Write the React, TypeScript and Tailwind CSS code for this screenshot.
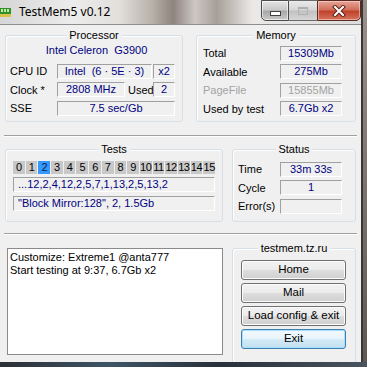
import React from 'react';

const font = "font-['Liberation_Sans',Arial,sans-serif]";

// sunken "static edge" box used for the read-only values
const fieldCls =
  'flex items-center h-[15px] border border-t-[#a0a0a0] border-l-[#a0a0a0] border-b-white border-r-white text-[11px] leading-[13px]';

const Field = ({ w, children, left, grey }: { w: string; children?: React.ReactNode; left?: boolean; grey?: boolean }) => (
  <div
    className={`${fieldCls} ${w} ${left ? 'justify-start pl-[4px]' : 'justify-center'} ${
      grey ? 'text-[#a3a3a3]' : 'text-[#000080]'
    } whitespace-nowrap overflow-hidden`}
  >
    {children}
  </div>
);

const GroupBox = ({
  title,
  className,
  children,
}: {
  title: string;
  className: string;
  children: React.ReactNode;
}) => (
  <div className={`relative border border-[#d5dfe5] rounded-[3px] shadow-[inset_1px_1px_0_#fff] ${className}`}>
    <div className="absolute left-1/2 -translate-x-1/2 top-[-8px] px-[3px] bg-[#f0f0f0] text-[11px] leading-[14px] text-black whitespace-nowrap">
      {title}
    </div>
    {children}
  </div>
);

const Separator = () => (
  <div className="ml-[4px] w-[353px] h-[2px] border-t border-t-[#a0a0a0] border-b border-b-white" />
);

const WinButton = ({ label, focused }: { label: string; focused?: boolean }) => (
  <div
    className={`h-[20px] w-[105px] rounded-[3px] border flex items-center justify-center text-[11.5px] text-black ${
      focused
        ? 'border-[#3c7fb1] shadow-[inset_0_0_0_1px_#a7e0fb] bg-[linear-gradient(180deg,#f2f9fd_0%,#e8f4fb_48%,#d4eaf6_52%,#c2dff0_100%)]'
        : 'border-[#707070] shadow-[inset_0_0_0_1px_#fcfcfc] bg-[linear-gradient(180deg,#f2f2f2_0%,#ebebeb_48%,#dddddd_52%,#cfcfcf_100%)]'
    }`}
  >
    {label}
  </div>
);

const tests = Array.from({ length: 16 }, (_, i) => i);

export default function App() {
  return (
    <div className={`w-[367px] h-[367px] overflow-hidden flex flex-col bg-[#7d746e] ${font}`}>
      <div className="flex h-[362px]">
        <div className="w-[361px] flex flex-col">
          {/* title bar */}
          <div className="h-[25px] flex items-start border-b border-b-[#8e8e8e] bg-[linear-gradient(90deg,#d6d6d6_0%,#ececec_20%,#e2dfdc_33%,#b9b1aa_42%,#8e847e_48%,#cdc8c4_54%,#a79f99_60%,#ebe9e7_70%,#dcdcdc_100%)]">
            <svg width="11" height="9" viewBox="0 0 11 9" className="mt-[8px]">
              <rect x="0" y="0" width="11" height="6" fill="#2f8f2a" />
              <rect x="1" y="1" width="2" height="3" fill="#bfe8a0" />
              <rect x="4" y="1" width="2" height="3" fill="#bfe8a0" />
              <rect x="7" y="1" width="2" height="3" fill="#bfe8a0" />
              <rect x="0" y="6" width="11" height="3" fill="#d8c24a" />
            </svg>
            <div className="ml-[8px] mt-[4px] text-[12px] leading-[16px] text-black font-['Noto_Sans',sans-serif]">
              TestMem5 v0.12
            </div>
            <div className="ml-auto flex h-[21px]">
              <div className="w-[28px] h-full border border-[#4b4b4b] rounded-bl-[5px] flex items-center justify-center bg-[linear-gradient(180deg,#e4e4e4_0%,#c9c9c9_45%,#a9a9a9_55%,#c8c8c8_100%)] shadow-[inset_0_0_0_1px_rgba(255,255,255,0.6)]">
                <div className="w-[11px] h-[5px] mt-[5px] bg-white border border-[#404040]" />
              </div>
              <div className="w-[28px] h-full border-y border-[#6a6a6a] flex items-center justify-center bg-[linear-gradient(180deg,#eaeaea_0%,#d6d6d6_45%,#c2c2c2_55%,#d6d6d6_100%)]">
                <div className="w-[10px] h-[8px] border border-[#b0b0b0] border-t-2" />
              </div>
              <div className="w-[44px] h-full border border-[#5a2a22] rounded-br-[5px] flex items-center justify-center bg-[linear-gradient(180deg,#e6a597_0%,#d2705c_45%,#c2432c_55%,#d5735e_100%)] shadow-[inset_0_0_0_1px_rgba(255,230,220,0.5)]">
                <svg width="14" height="12" viewBox="0 0 14 12">
                  <path d="M3 2 L11 10 M11 2 L3 10" stroke="#5b2318" strokeWidth="4" strokeLinecap="square" />
                  <path d="M3 2 L11 10 M11 2 L3 10" stroke="#ffffff" strokeWidth="2" strokeLinecap="square" />
                </svg>
              </div>
            </div>
          </div>

          {/* client area */}
          <div className="flex-1 bg-[#f0f0f0] flex flex-col overflow-hidden text-[11px] text-black">
            <div className="flex pl-[5px] mt-[10px] gap-[13px]">
              <GroupBox title="Processor" className="w-[178px] h-[87px]">
                <div className="mt-[8px] h-[13px] leading-[13px] text-center pl-[5px] text-[#000080]">
                  Intel Celeron&nbsp; G3900
                </div>
                <div className="mt-[6px] flex flex-col gap-[2px] pl-[4px]">
                  <div className="flex items-center">
                    <div className="w-[47px]">CPU ID</div>
                    <Field w="w-[95px]">Intel&nbsp; (6 · 5E · 3)</Field>
                    <div className="w-[1px]" />
                    <Field w="w-[22px]">x2</Field>
                  </div>
                  <div className="flex items-center">
                    <div className="w-[47px]">Clock *</div>
                    <Field w="w-[68px]">2808 MHz</Field>
                    <div className="w-[28px] pl-[3px]">Used</div>
                    <Field w="w-[22px]">2</Field>
                  </div>
                  <div className="flex items-center">
                    <div className="w-[47px]">SSE</div>
                    <Field w="w-[118px]">7.5 sec/Gb</Field>
                  </div>
                </div>
              </GroupBox>
              <GroupBox title="Memory" className="w-[160px] h-[87px]">
                <div className="mt-[9px] flex flex-col gap-[2px] pl-[6px]">
                  <div className="flex items-center">
                    <div className="w-[77px]">Total</div>
                    <Field w="w-[62px]">15309Mb</Field>
                  </div>
                  <div className="flex items-center">
                    <div className="w-[77px]">Available</div>
                    <Field w="w-[62px]">275Mb</Field>
                  </div>
                  <div className="flex items-center">
                    <div className="w-[77px] text-[#a3a3a3]">PageFile</div>
                    <Field w="w-[62px]" grey>
                      15855Mb
                    </Field>
                  </div>
                  <div className="flex items-center">
                    <div className="w-[77px]">Used by test</div>
                    <Field w="w-[62px]">6.7Gb x2</Field>
                  </div>
                </div>
              </GroupBox>
            </div>

            <div className="mt-[13px]">
              <Separator />
            </div>

            <div className="flex pl-[5px] mt-[12px] gap-[9px]">
              <GroupBox title="Tests" className="w-[218px] h-[73px]">
                <div className="mt-[11px] ml-[7px] grid grid-cols-16 gap-px w-[202px]">
                  {tests.map((n) => (
                    <div
                      key={n}
                      className={`h-[13px] leading-[13px] text-[11px] text-center tracking-[-0.5px] whitespace-nowrap ${
                        n === 2 ? 'bg-[#3399ff] text-[#10204a]' : 'bg-[#c8c8c8] text-black'
                      }`}
                    >
                      {n}
                    </div>
                  ))}
                </div>
                <div className="mt-[3px] ml-[7px] flex flex-col gap-[4px]">
                  <Field w="w-[202px]" left>
                    ...12,2,4,12,2,5,7,1,13,2,5,13,2
                  </Field>
                  <Field w="w-[202px]" left>
                    "Block Mirror:128", 2, 1.5Gb
                  </Field>
                </div>
              </GroupBox>
              <GroupBox title="Status" className="w-[124px] h-[73px]">
                <div className="mt-[11px] flex flex-col gap-[2px] pl-[5px]">
                  <div className="flex items-center">
                    <div className="w-[42px]">Time</div>
                    <Field w="w-[62px]">33m 33s</Field>
                  </div>
                  <div className="flex items-center">
                    <div className="w-[42px]">Cycle</div>
                    <Field w="w-[62px]">1</Field>
                  </div>
                  <div className="flex items-center">
                    <div className="w-[42px]">Error(s)</div>
                    <Field w="w-[62px]" />
                  </div>
                </div>
              </GroupBox>
            </div>

            <div className="mt-[11px]">
              <Separator />
            </div>

            <div className="flex pl-[7px] mt-[13px] gap-[9px]">
              <div className="w-[216px] h-[107px] bg-white border border-[#8a8a8a] pl-[2px] pt-[2px] leading-[13px]">
                <div>Customize: Extreme1 @anta777</div>
                <div>Start testing at 9:37, 6.7Gb x2</div>
              </div>
              <GroupBox title="testmem.tz.ru" className="w-[124px] h-[120px]">
                <div className="mt-[11px] ml-[8px] flex flex-col gap-[3px]">
                  <WinButton label="Home" />
                  <WinButton label="Mail" />
                  <WinButton label="Load config & exit" />
                  <WinButton label="Exit" focused />
                </div>
              </GroupBox>
            </div>
          </div>
        </div>
        <div className="w-[2px] bg-[#3b3735]" />
        <div className="flex-1 bg-[linear-gradient(180deg,#9a918a_0%,#7d746e_50%,#5f5852_100%)]" />
      </div>
      <div className="h-[5px] bg-[linear-gradient(90deg,#2b2f36_0%,#3e5566_30%,#28303a_60%,#4a5460_100%)]" />
    </div>
  );
}
